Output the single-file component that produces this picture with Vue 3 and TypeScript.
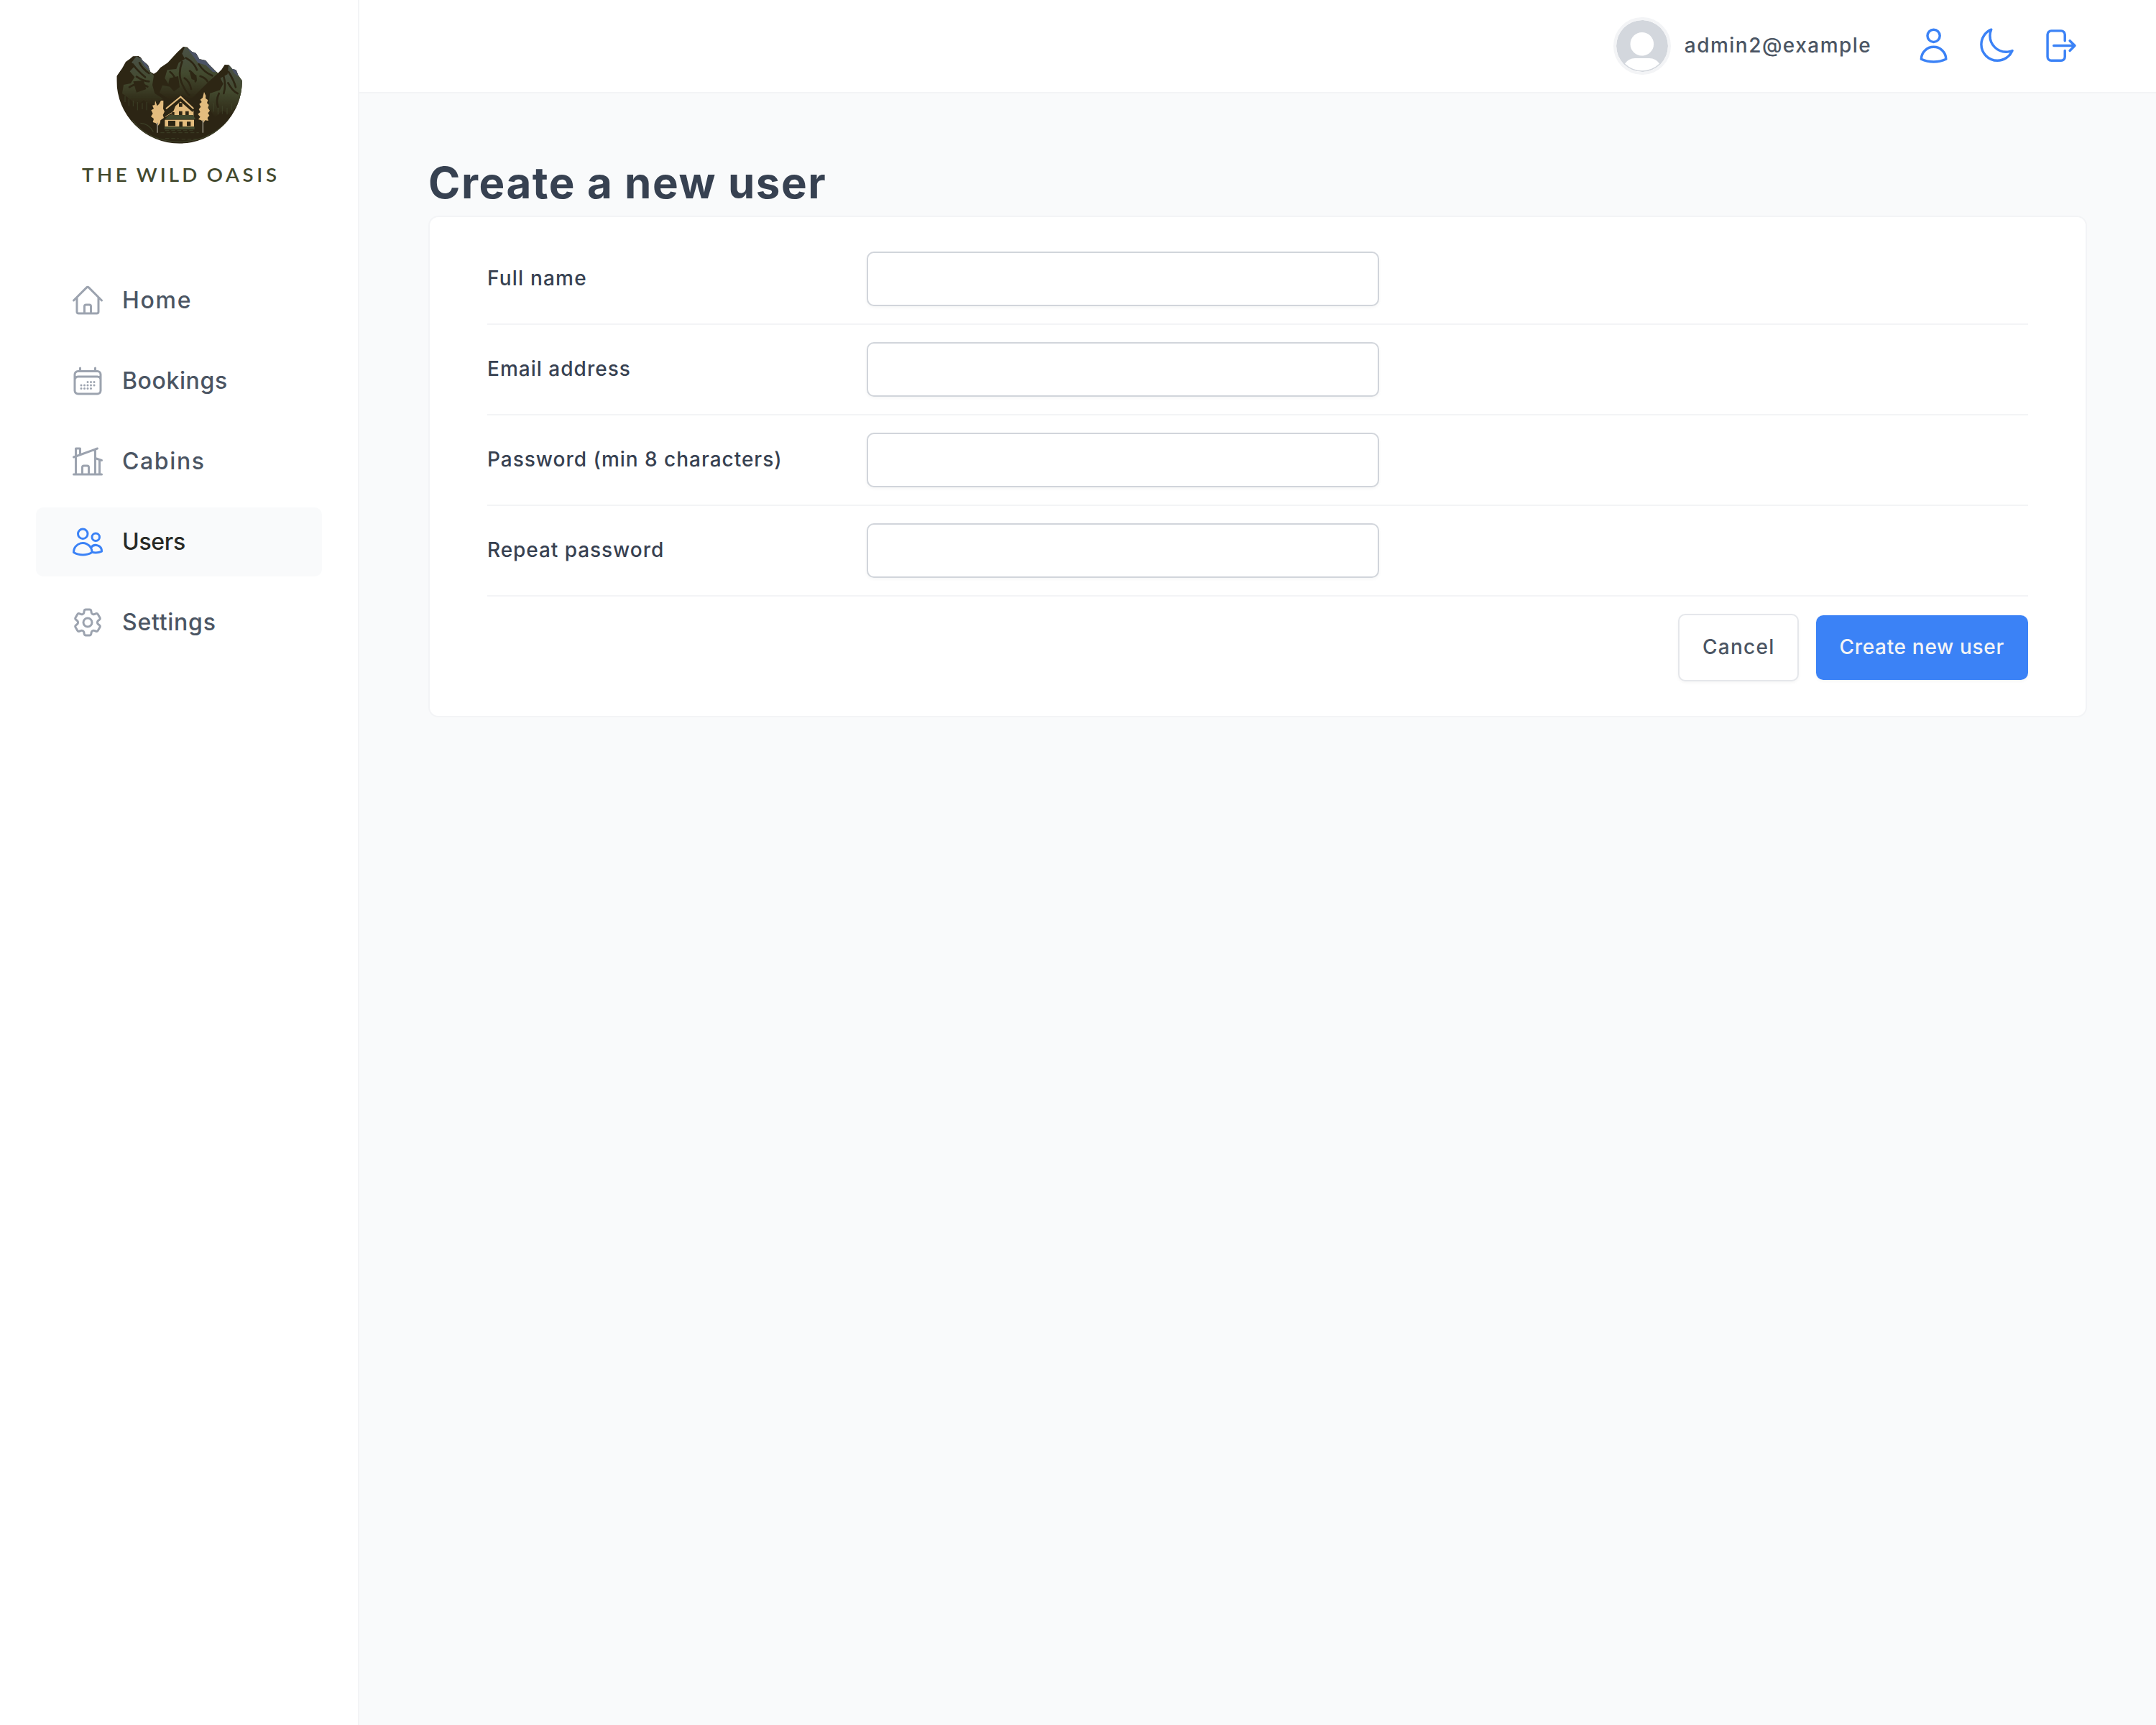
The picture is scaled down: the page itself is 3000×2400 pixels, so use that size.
<script setup lang="ts">
interface NavItem {
  label: string
  icon: string[]
  tracking: number
  active?: boolean
}

interface Field {
  id: string
  label: string
  type: string
  tracking: number
}

interface Action {
  name: string
  icon: string[]
}

const navItems: NavItem[] = [
  {
    label: 'Home',
    tracking: 1.7,
    icon: [
      'm2.25 12 8.954-8.955c.44-.439 1.152-.439 1.591 0L21.75 12M4.5 9.75v10.125c0 .621.504 1.125 1.125 1.125H9.75v-4.875c0-.621.504-1.125 1.125-1.125h2.25c.621 0 1.125.504 1.125 1.125V21h4.125c.621 0 1.125-.504 1.125-1.125V9.75M8.25 21h8.25',
    ],
  },
  {
    label: 'Bookings',
    tracking: 0.6,
    icon: [
      'M6.75 3v2.25M17.25 3v2.25M3 18.75V7.5a2.25 2.25 0 0 1 2.25-2.25h13.5A2.25 2.25 0 0 1 21 7.5v11.25m-18 0A2.25 2.25 0 0 0 5.25 21h13.5A2.25 2.25 0 0 0 21 18.75m-18 0v-7.5A2.25 2.25 0 0 1 5.25 9h13.5A2.25 2.25 0 0 1 21 11.25v7.5m-9-6h.008v.008H12v-.008ZM12 15h.008v.008H12V15Zm0 2.25h.008v.008H12v-.008ZM9.75 15h.008v.008H9.75V15Zm0 2.25h.008v.008H9.75v-.008ZM7.5 15h.008v.008H7.5V15Zm0 2.25h.008v.008H7.5v-.008Zm6.75-4.5h.008v.008h-.008v-.008Zm0 2.25h.008v.008h-.008V15Zm0 2.25h.008v.008h-.008v-.008Zm2.25-4.5h.008v.008H16.5v-.008Zm0 2.25h.008v.008H16.5V15Z',
    ],
  },
  {
    label: 'Cabins',
    tracking: 1.6,
    icon: [
      'M8.25 21v-4.875c0-.621.504-1.125 1.125-1.125h2.25c.621 0 1.125.504 1.125 1.125V21m0 0h4.5V3.545M12.75 21h7.5V10.75M2.25 21h1.5m18 0h-18M2.25 9l4.5-1.636M18.75 3l-1.5.545m0 6.205 3 1m1.5.5-1.5-.5M6.75 7.364V3h-3v18m3-13.636 10.5-3.819',
    ],
  },
  {
    label: 'Users',
    tracking: -0.3,
    active: true,
    icon: [
      'M15 19.128a9.38 9.38 0 0 0 2.625.372 9.337 9.337 0 0 0 4.121-.952 4.125 4.125 0 0 0-7.533-2.493M15 19.128v-.003c0-1.113-.285-2.16-.786-3.07M15 19.128v.106A12.318 12.318 0 0 1 8.624 21c-2.331 0-4.512-.645-6.374-1.766l-.001-.109a6.375 6.375 0 0 1 11.964-3.07M12 6.375a3.375 3.375 0 1 1-6.75 0 3.375 3.375 0 0 1 6.75 0Zm8.25 2.25a2.625 2.625 0 1 1-5.25 0 2.625 2.625 0 0 1 5.25 0Z',
    ],
  },
  {
    label: 'Settings',
    tracking: 0.74,
    icon: [
      'M9.594 3.94c.09-.542.56-.94 1.11-.94h2.593c.55 0 1.02.398 1.11.94l.213 1.281c.063.374.313.686.645.87.074.04.147.083.22.127.325.196.72.257 1.075.124l1.217-.456a1.125 1.125 0 0 1 1.37.49l1.296 2.247a1.125 1.125 0 0 1-.26 1.431l-1.003.827c-.293.241-.438.613-.43.992a7.723 7.723 0 0 1 0 .255c-.008.378.137.75.43.991l1.004.827c.424.35.534.955.26 1.43l-1.298 2.247a1.125 1.125 0 0 1-1.369.491l-1.217-.456c-.355-.133-.75-.072-1.076.124a6.47 6.47 0 0 1-.22.128c-.331.183-.581.495-.644.869l-.213 1.281c-.09.543-.56.94-1.11.94h-2.594c-.55 0-1.019-.398-1.11-.94l-.213-1.281c-.062-.374-.312-.686-.644-.87a6.52 6.52 0 0 1-.22-.127c-.325-.196-.72-.257-1.076-.124l-1.217.456a1.125 1.125 0 0 1-1.369-.49l-1.297-2.247a1.125 1.125 0 0 1 .26-1.431l1.004-.827c.292-.24.437-.613.43-.991a6.932 6.932 0 0 1 0-.255c.007-.38-.138-.751-.43-.992l-1.004-.827a1.125 1.125 0 0 1-.26-1.43l1.297-2.247a1.125 1.125 0 0 1 1.37-.491l1.216.456c.356.133.751.072 1.076-.124.072-.044.146-.086.22-.128.332-.183.582-.495.644-.869l.214-1.28Z',
      'M15 12a3 3 0 1 1-6 0 3 3 0 0 1 6 0Z',
    ],
  },
]

const actions: Action[] = [
  {
    name: 'Account',
    icon: [
      'M15.75 6a3.75 3.75 0 1 1-7.5 0 3.75 3.75 0 0 1 7.5 0ZM4.501 20.118a7.5 7.5 0 0 1 14.998 0A17.933 17.933 0 0 1 12 21.75c-2.676 0-5.216-.584-7.499-1.632Z',
    ],
  },
  {
    name: 'Dark mode',
    icon: [
      'M21.752 15.002A9.72 9.72 0 0 1 18 15.75c-5.385 0-9.75-4.365-9.75-9.75 0-1.33.266-2.597.748-3.752A9.753 9.753 0 0 0 3 11.25C3 16.635 7.365 21 12.75 21a9.753 9.753 0 0 0 9.002-5.998Z',
    ],
  },
  {
    name: 'Log out',
    icon: [
      'M15.75 9V5.25A2.25 2.25 0 0 0 13.5 3h-6a2.25 2.25 0 0 0-2.25 2.25v13.5A2.25 2.25 0 0 0 7.5 21h6a2.25 2.25 0 0 0 2.25-2.25V15m3 0 3-3m0 0-3-3m3 3H9',
    ],
  },
]

const fields: Field[] = [
  { id: 'fullName', label: 'Full name', type: 'text', tracking: 1.2 },
  { id: 'email', label: 'Email address', type: 'email', tracking: 1.02 },
  { id: 'password', label: 'Password (min 8 characters)', type: 'password', tracking: 0.98 },
  { id: 'passwordConfirm', label: 'Repeat password', type: 'password', tracking: 0.94 },
]
</script>

<template>
  <div class="layout">
    <aside class="sidebar">
      <svg class="logo" viewBox="0 0 960 660" role="img" aria-label="The Wild Oasis">
        <defs>
          <clipPath id="bowl">
            <path
              d="M217 187V168L240 135 255 108 272 96 285 85 308 84 318 90 325 102 348 122 358 150 372 158 385 150 400 132 430 112 470 68 495 45 512 47 530 65 548 72 562 96 588 102 605 122 630 147 640 155 655 140 668 120 685 121 700 138 716 142 725 165 741 187A262 262 0 0 1 217 187Z"
            />
          </clipPath>
          <linearGradient id="slope" x1="0" y1="0" x2="0" y2="1">
            <stop offset="0" stop-color="#4a5146" />
            <stop offset="0.5" stop-color="#434a2f" />
            <stop offset="1" stop-color="#2d2614" />
          </linearGradient>
        </defs>
        <g clip-path="url(#bowl)">
          <rect x="210" y="40" width="540" height="415" fill="#2d2614" />
          <path
            fill="url(#slope)"
            d="M300 84 322 98 350 122 360 152 372 166 366 205 376 240 410 262 360 290 330 268 300 290 270 262 240 240 246 204 276 198 292 172 272 148 290 128 280 110Z"
          />
          <path
            fill="url(#slope)"
            d="M502 46 530 62 550 72 564 98 590 102 640 156 600 192 560 232 530 262 488 246 440 266 396 238 408 206 440 212 418 176 428 142 466 138 476 112 502 96 490 74Z"
          />
          <path
            fill="url(#slope)"
            d="M684 120 712 142 742 190 736 250 716 300 690 330 660 312 628 340 600 300 606 240 648 226 662 200 650 176 680 160Z"
          />
          <path fill="#4b5365" d="M510 50 532 64 550 73 564 97 590 103 634 152 618 150 590 122 556 112 536 84ZM690 124 716 143 727 170 708 156ZM312 88 346 122 356 148 332 124Z" />
          <g fill="none" stroke="#2d2614" stroke-width="8" stroke-linecap="round">
            <path d="M490 108Q470 160 492 204T520 246M506 92Q540 110 552 142M522 146Q550 166 546 190M560 118Q580 150 616 166M440 150Q470 172 462 214M500 176Q522 190 528 222M566 168Q590 176 596 190" />
            <path d="M284 118Q304 146 336 172M312 112Q324 136 352 156M270 214Q306 190 346 212M300 170Q330 190 352 190" />
            <path d="M664 170Q674 204 664 240M684 150Q706 184 714 214M682 196Q700 230 722 240M644 240Q630 270 640 296" />
          </g>
          <path fill="#2d2614" d="M522 152 550 164 552 188 530 180ZM438 176 474 168 480 214 456 232 432 204ZM286 190 330 186 340 222 300 236Z" />
          <g fill="none" stroke="#434a2f" stroke-width="3" opacity="0.7">
            <path d="M252 250v26M268 262v30M286 270v24M304 276v34M324 280v26M342 276v34M622 280v36M640 300v28M658 292v34M678 300v28M698 280v30" />
            <path stroke-dasharray="16 9" d="M420 395H540M400 404H560M420 428H476M488 431H560" />
            <path stroke-width="4" d="M316 364Q352 366 370 400M282 352Q350 440 480 442 610 440 690 344" />
          </g>
        </g>
        <!-- trees -->
        <path
          fill="#e3bc7e"
          d="M378 270 386 292 394 284 402 270 412 270 412 284 411 304 417 316 410 330 414 342 400 352 398 364 389 376 380 364 368 360 372 346 360 336 368 324 361 310 372 304 366 290 376 288Z"
        />
        <path
          fill="#e3bc7e"
          d="M582 234 589 250 588 260 598 268 594 280 602 288 598 300 606 312 598 322 604 332 596 342 600 354 586 352 580 362 570 352 558 348 566 338 556 326 566 318 560 306 568 296 562 284 572 276 566 266 576 258Z"
        />
        <path stroke="#8a8577" stroke-width="5" d="M387 362V404M577 352V404" />
        <!-- cabin -->
        <path fill="#e3bc7e" d="M484 266 538 312V336H440L456 318 440 326 418 340 412 346 452 304Z" />
        <path fill="none" stroke="#2d2614" stroke-width="9" d="M430 314 484 268 536 314" />
        <path fill="none" stroke="#e3bc7e" stroke-width="6" d="M423 304 484 254 538 304" />
        <path fill="#2d2614" d="M424 312 466 282 454 314 424 334Z" />
        <path fill="#434a2f" d="M436 330H536L546 348H418Z" />
        <rect x="418" y="350" width="122" height="28" fill="#e3bc7e" />
        <rect x="416" y="379" width="126" height="11" fill="#434a2f" />
        <path fill="#2d2614" d="M477 280h14v16h-14ZM477 314h14v16h-14ZM504 314h14v16h-14ZM448 318h10v12h-10ZM432 354h30v22h-30ZM478 358h14v20h-14ZM510 358h16v18h-16Z" />
        <g class="wordmark">
          <text x="72" y="608" textLength="188">THE</text>
          <text x="299" y="608" textLength="254">WILD</text>
          <text x="593" y="608" textLength="292">OASIS</text>
        </g>
      </svg>

      <nav>
        <ul class="nav-list">
          <li v-for="item in navItems" :key="item.label">
            <a class="nav-link" :class="{ active: item.active }">
              <svg viewBox="0 0 24 24" class="icon">
                <path v-for="d in item.icon" :key="d" :d="d" />
              </svg>
              <span :style="{ letterSpacing: item.tracking + 'px' }">{{ item.label }}</span>
            </a>
          </li>
        </ul>
      </nav>
    </aside>

    <header class="header">
      <div class="user">
        <svg class="avatar" viewBox="0 0 72 72">
          <circle cx="36" cy="36" r="36" fill="#d3d7dd" />
          <circle cx="35.8" cy="33.3" r="16.3" fill="#fff" />
          <path fill="#fff" d="M12 60.5Q17 53 26 53H46Q55 53 60 60.5A34.6 34.6 0 0 1 12 60.5Z" />
        </svg>
        <span class="user-name">admin2@example</span>
      </div>
      <div class="actions">
        <button v-for="action in actions" :key="action.name" class="icon-button" :aria-label="action.name">
          <svg viewBox="0 0 24 24" class="icon">
            <path v-for="d in action.icon" :key="d" :d="d" />
          </svg>
        </button>
      </div>
    </header>

    <main class="main">
      <h1>Create a new user</h1>
      <form class="form" @submit.prevent>
        <div v-for="field in fields" :key="field.id" class="form-row">
          <label :for="field.id" :style="{ letterSpacing: field.tracking + 'px' }">{{ field.label }}</label>
          <input :id="field.id" :type="field.type" />
        </div>
        <div class="form-actions">
          <button type="reset" class="button secondary">Cancel</button>
          <button class="button primary">Create new user</button>
        </div>
      </form>
    </main>
  </div>
</template>

<style>
body {
  margin: 0;
}
</style>

<style scoped>
* {
  box-sizing: border-box;
  margin: 0;
  padding: 0;
}

.layout {
  display: grid;
  grid-template-columns: 500px 1fr;
  grid-template-rows: 130px 1fr;
  height: 100vh;
  font-family: Inter, 'Open Sans', sans-serif;
  font-size: 28px;
  font-weight: 550;
  line-height: 1.5;
  color: #374151;
}

.sidebar {
  grid-row: 1 / -1;
  display: flex;
  flex-direction: column;
  gap: 100px;
  padding: 50px 50px 0;
  background: #fff;
  border-right: 2px solid #f3f4f6;
}

.logo {
  width: 320px;
  height: 220px;
  margin-left: 40px;
}

.wordmark {
  font-family: Lato, sans-serif;
  font-size: 83px;
  font-weight: 600;
  fill: #434a2f;
}

.nav-list {
  display: flex;
  flex-direction: column;
  gap: 16px;
  list-style: none;
}

.nav-link {
  display: flex;
  align-items: center;
  gap: 24px;
  height: 96px;
  padding: 0 48px;
  border-radius: 10px;
  font-size: 32px;
  color: #4b5563;
}

.nav-link.active {
  background: #f9fafb;
  color: #282a26;
}

.icon {
  width: 48px;
  height: 48px;
  fill: none;
  stroke: #9ca3af;
  stroke-width: 1.5;
  stroke-linecap: round;
  stroke-linejoin: round;
}

.nav-link.active .icon {
  stroke: #3b82f6;
}

.header {
  display: flex;
  align-items: center;
  justify-content: flex-end;
  gap: 47px;
  padding: 0 96px;
  background: #fff;
  border-bottom: 2px solid #f3f4f6;
}

.user {
  display: flex;
  align-items: center;
  gap: 19px;
}

.avatar {
  width: 80px;
  height: 80px;
  border: 4px solid #f3f4f6;
  border-radius: 50%;
}

.user-name {
  padding-bottom: 2px;
  letter-spacing: 1.48px;
  color: #4b5563;
}

.actions {
  display: flex;
  gap: 7.6px;
}

.icon-button {
  display: flex;
  padding: 12px;
  border: none;
  background: none;
}

.icon-button .icon {
  width: 55.2px;
  height: 55.2px;
  stroke: #3b82f6;
}

.main {
  padding: 80px 96px 128px;
  background: #f9fafb;
}

h1 {
  padding-bottom: 2px;
  font-size: 60px;
  font-weight: 700;
  line-height: 88px;
  letter-spacing: 1.58px;
}

.form {
  padding: 48px 80px;
  background: #fff;
  border: 2px solid #f3f4f6;
  border-radius: 14px;
}

.form-row {
  display: grid;
  grid-template-columns: 480px 1fr 1.2fr;
  gap: 48px;
  align-items: center;
  padding: 24px 0;
  border-bottom: 2px solid #f3f4f6;
}

.form-row:first-child {
  padding-top: 0;
}

.form-row label {
  padding-bottom: 2px;
  white-space: nowrap;
}

.form-row input {
  width: 100%;
  height: 76px;
  padding: 16px 24px;
  border: 2px solid #d1d5db;
  border-radius: 10px;
  background: #fff;
  box-shadow: 0 2px 4px rgba(0, 0, 0, 0.04);
  font: inherit;
}

.form-actions {
  display: flex;
  align-items: center;
  justify-content: flex-end;
  gap: 24px;
  padding-top: 24px;
}

.button {
  padding-bottom: 2px;
  border: none;
  border-radius: 10px;
  box-shadow: 0 2px 4px rgba(0, 0, 0, 0.04);
  font: inherit;
}

.button.secondary {
  width: 167.5px;
  height: 94px;
  padding-left: 1px;
  border: 2px solid #e5e7eb;
  background: #fff;
  letter-spacing: 1.3px;
  color: #4b5563;
}

.button.primary {
  width: 295.5px;
  height: 90px;
  background: #3b82f6;
  letter-spacing: 0.68px;
  color: #f3f4f6;
}
</style>
